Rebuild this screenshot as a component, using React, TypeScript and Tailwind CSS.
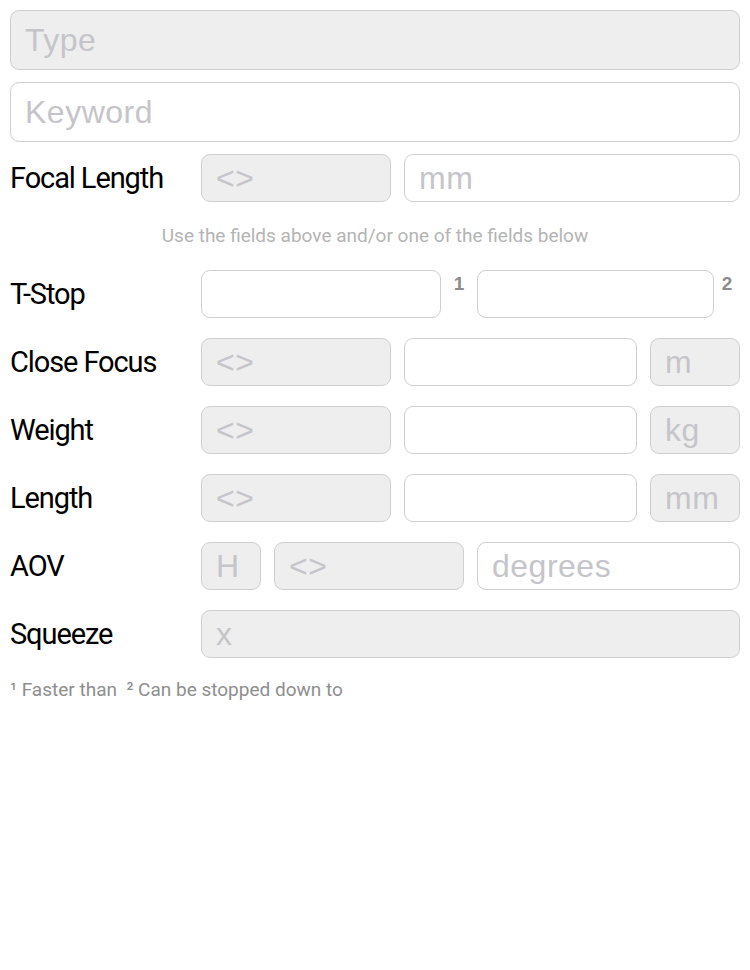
import React from "react";

const narrow = "font-['Roboto','Liberation_Sans',sans-serif]";

type FieldProps = {
  placeholder?: string;
  gray?: boolean;
  className?: string;
  tall?: boolean;
};

function Field({ placeholder = "", gray = false, className = "", tall = false }: FieldProps) {
  return (
    <input
      readOnly
      size={1}
      placeholder={placeholder}
      className={`${tall ? "h-[60px]" : "h-12"} ${className} min-w-0 rounded-[9px] border border-[#cfcfcf] px-[14px] font-['Liberation_Sans',Arial,sans-serif] text-[32px] tracking-[0.5px] outline-none placeholder:text-[#c5c5c9] ${
        gray ? "bg-[#eeeeee]" : "bg-white"
      }`}
    />
  );
}

function Label({ children }: { children: React.ReactNode }) {
  return (
    <div
      className={`w-[191px] shrink-0 text-[29px] leading-none tracking-[-1.1px] text-black ${narrow}`}>
      {children}
    </div>
  );
}

function Sup({ n, w }: { n: string; w: string }) {
  return (
    <div
      className={`${w} shrink-0 self-start pt-[4px] text-center font-['Liberation_Sans',Arial,sans-serif] text-[19px] font-bold leading-none text-[#8c8c8c]`}>
      {n}
    </div>
  );
}

export default function App() {
  return (
    <div className="min-h-[970px] w-[750px] bg-white px-[10px] pt-[10px]">
      <div className="flex flex-col gap-3">
        <Field placeholder="Type" gray tall className="w-full" />
        <Field placeholder="Keyword" tall className="w-full" />
        <div className="flex items-center">
          <Label>Focal Length</Label>
          <div className="flex min-w-0 flex-1 gap-[13px]">
            <Field placeholder="<>" gray className="w-[190px]" />
            <Field placeholder="mm" className="flex-1" />
          </div>
        </div>
      </div>

      <div
        className={`flex h-[68px] items-center justify-center text-[19px] text-[#b4b4b4] ${narrow}`}>
        Use the fields above and/or one of the fields below
      </div>

      <div className="flex flex-col gap-5">
        <div className="flex items-center">
          <Label>T-Stop</Label>
          <div className="flex min-w-0 flex-1">
            <Field className="w-[240px]" />
            <Sup n="1" w="w-[36px]" />
            <Field className="flex-1" />
            <Sup n="2" w="w-[26px]" />
          </div>
        </div>

        {[
          { label: "Close Focus", unit: "m" },
          { label: "Weight", unit: "kg" },
          { label: "Length", unit: "mm" },
        ].map((row) => (
          <div key={row.label} className="flex items-center">
            <Label>{row.label}</Label>
            <div className="flex min-w-0 flex-1 gap-[13px]">
              <Field placeholder="<>" gray className="w-[190px]" />
              <Field className="flex-1" />
              <Field placeholder={row.unit} gray className="w-[90px]" />
            </div>
          </div>
        ))}

        <div className="flex items-center">
          <Label>AOV</Label>
          <div className="flex min-w-0 flex-1 gap-[13px]">
            <Field placeholder="H" gray className="w-[60px]" />
            <Field placeholder="<>" gray className="w-[190px]" />
            <Field placeholder="degrees" className="flex-1" />
          </div>
        </div>

        <div className="flex items-center">
          <Label>Squeeze</Label>
          <Field placeholder="x" gray className="flex-1" />
        </div>
      </div>

      <div className={`mt-5 text-[19px] leading-6 text-[#8e8e8e] ${narrow}`}>
        ¹ Faster than&nbsp; ² Can be stopped down to
      </div>
    </div>
  );
}
